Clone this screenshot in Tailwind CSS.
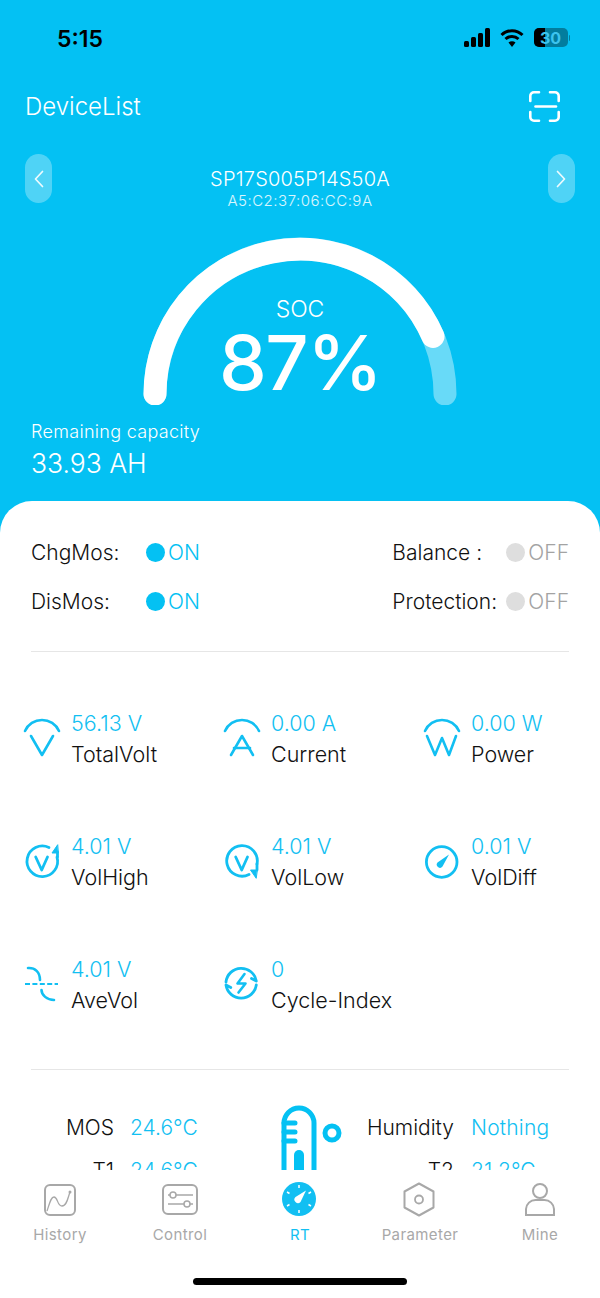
<!DOCTYPE html>
<html>
<head>
<meta charset="utf-8">
<script src="https://cdn.jsdelivr.net/npm/@tailwindcss/browser@4"></script>
</head>
<body class="m-0">
<div class="w-[600px] h-[1298px] flex flex-col overflow-hidden bg-[#04c1f3] font-['Inter','Liberation_Sans',sans-serif]">
  <!-- blue header -->
  <div class="h-[501px] shrink-0 text-white">
    <div class="h-[76px] relative flex items-center justify-between pl-[57px] pr-[30px] pb-[1px] text-black">
      <span class="text-[23px] font-semibold leading-none mt-[3px]">5:15</span>
      <div class="flex items-center gap-[10px]">
        <svg width="26" height="19" viewBox="0 0 26 19" fill="#000"><rect x="0" y="13" width="5" height="6" rx="1.5"/><rect x="7" y="9" width="5" height="10" rx="1.5"/><rect x="14" y="5" width="5" height="14" rx="1.5"/><rect x="21" y="0" width="5" height="19" rx="1.5"/></svg>
        <svg width="24" height="19" viewBox="0 0 24 19" fill="none" stroke="#000" stroke-width="3"><path d="M1.5 7 A15 15 0 0 1 22.5 7"/><path d="M5.5 11 A9.5 9.5 0 0 1 18.5 11"/><path d="M12 19 L8.5 14.6 A5 5 0 0 1 15.5 14.6 Z" fill="#000" stroke="none"/></svg>
        <div class="flex items-center gap-[1px]">
          <div class="relative w-[34px] h-[19px] rounded-[5px] bg-black/35 overflow-hidden flex items-center justify-center">
            <div class="absolute left-0 top-0 h-full w-[11px] bg-black"></div>
            <span class="relative text-[16px] font-bold leading-none text-[#3cc4ee]">30</span>
          </div>
          <div class="w-[1.5px] h-[6px] rounded-r-sm bg-black/35"></div>
        </div>
      </div>
    </div>
    <div class="h-[60px] flex items-center justify-between pl-[25px] pr-[40px]">
      <span class="text-[24px] leading-none font-light mt-[2px]">DeviceList</span>
      <svg width="31" height="31" viewBox="0 0 31 31" fill="none" stroke="#fff" stroke-width="2.6" stroke-linecap="round"><path d="M1.3 10 V5 A3.7 3.7 0 0 1 5 1.3 H10"/><path d="M21 1.3 H26 A3.7 3.7 0 0 1 29.7 5 V10"/><path d="M1.3 21 V26 A3.7 3.7 0 0 0 5 29.7 H10"/><path d="M21 29.7 H26 A3.7 3.7 0 0 0 29.7 26 V21"/><path d="M6.5 15.5 H27"/></svg>
    </div>
    <div class="mt-[18px] h-[49px] flex items-start justify-between px-[25px]">
      <div class="w-[27px] h-[49px] rounded-full bg-white/30 flex items-center justify-center">
        <svg width="10" height="18" viewBox="0 0 10 18" fill="none" stroke="#fff" stroke-opacity="0.9" stroke-width="1.7" stroke-linecap="round" stroke-linejoin="round"><path d="M8.5 1.5 L1.5 9 L8.5 16.5"/></svg>
      </div>
      <div class="mt-[14px] flex flex-col items-center">
        <span class="text-[20px] leading-[22px] font-light tracking-[0.2px]">SP17S005P14S50A</span>
        <span class="text-[15px] leading-[22px] font-light tracking-[0.5px] text-white/85">A5:C2:37:06:CC:9A</span>
      </div>
      <div class="w-[27px] h-[49px] rounded-full bg-white/30 flex items-center justify-center">
        <svg width="10" height="18" viewBox="0 0 10 18" fill="none" stroke="#fff" stroke-opacity="0.9" stroke-width="1.7" stroke-linecap="round" stroke-linejoin="round"><path d="M1.5 1.5 L8.5 9 L1.5 16.5"/></svg>
      </div>
    </div>
    <div class="relative mt-[34px] h-[168px] flex justify-center">
      <svg width="314" height="168" viewBox="143 237 314 168" fill="none" stroke-width="23" stroke-linecap="round">
        <path d="M155 394 A145 145 0 0 1 445 394" stroke="#fff" stroke-opacity="0.4"/>
        <path d="M155 394 A145 145 0 0 1 433 336.4" stroke="#fff"/>
      </svg>
      <div class="absolute inset-x-0 top-[59px] flex flex-col items-center">
        <span class="text-[23px] leading-[26px] font-light">SOC</span>
        <span class="text-[76px] leading-[60px] font-medium tracking-[-1.5px] mt-[10px]">87%</span>
      </div>
    </div>
    <div class="mt-[15px] pl-[31px] flex flex-col">
      <span class="text-[18px] leading-[24px] font-light tracking-[0.3px]">Remaining capacity</span>
      <span class="text-[26.500px] leading-[30px] font-light mt-[4px]">33.93 AH</span>
    </div>
  </div>

  <!-- white card -->
  <div class="flex-1 min-h-0 overflow-hidden bg-white rounded-t-[32px]">
    <div class="px-[31px] pt-[27px]">
      <div class="h-[49px] flex items-center text-[21px] font-light text-[#111]">
        <span class="w-[115px]">ChgMos:</span>
        <span class="w-[19px] h-[19px] rounded-full bg-[#04c1f3]"></span>
        <span class="ml-[3px] text-[#04c1f3]">ON</span>
        <span class="ml-auto w-[114px]">Balance :</span>
        <span class="w-[19px] h-[19px] rounded-full bg-[#dedede]"></span>
        <span class="ml-[3px] text-[#a3a3a3]">OFF</span>
      </div>
      <div class="h-[49px] flex items-center text-[21px] font-light text-[#111]">
        <span class="w-[115px]">DisMos:</span>
        <span class="w-[19px] h-[19px] rounded-full bg-[#04c1f3]"></span>
        <span class="ml-[3px] text-[#04c1f3]">ON</span>
        <span class="ml-auto w-[114px]">Protection:</span>
        <span class="w-[19px] h-[19px] rounded-full bg-[#dedede]"></span>
        <span class="ml-[3px] text-[#a3a3a3]">OFF</span>
      </div>
      <div class="mt-[25px] h-[1px] bg-[#e6e6e6]"></div>
    </div>

    <div class="grid grid-cols-[200px_200px_177px] auto-rows-[123px] pt-[56px] pl-[23px]">
      <div class="flex">
        <svg class="mt-[9px] shrink-0" width="38" height="42" viewBox="0 0 38 42" fill="none" stroke="#12bff2" stroke-width="2.6" stroke-linecap="round" stroke-linejoin="round"><path d="M2 14 A18.600 18.600 0 0 1 36 14"/><path d="M8 19 L19 38 L30 19"/></svg>
        <div class="ml-[10px] flex flex-col"><span class="text-[21.500px] leading-[31px] font-light text-[#12bff2]">56.13 V</span><span class="text-[21.500px] leading-[31px] font-light text-[#111]">TotalVolt</span></div>
      </div>
      <div class="flex">
        <svg class="mt-[9px] shrink-0" width="38" height="42" viewBox="0 0 38 42" fill="none" stroke="#12bff2" stroke-width="2.6" stroke-linecap="round" stroke-linejoin="round"><path d="M2 14 A18.600 18.600 0 0 1 36 14"/><path d="M8 38 L19 19 L30 38"/><path d="M11 31 H27"/></svg>
        <div class="ml-[10px] flex flex-col"><span class="text-[21.500px] leading-[31px] font-light text-[#12bff2]">0.00 A</span><span class="text-[21.500px] leading-[31px] font-light text-[#111]">Current</span></div>
      </div>
      <div class="flex">
        <svg class="mt-[9px] shrink-0" width="38" height="42" viewBox="0 0 38 42" fill="none" stroke="#12bff2" stroke-width="2.6" stroke-linecap="round" stroke-linejoin="round"><path d="M2 14 A18.600 18.600 0 0 1 36 14"/><path d="M4 19 L12 38 L19 21 L26 38 L33 19"/></svg>
        <div class="ml-[10px] flex flex-col"><span class="text-[21.500px] leading-[31px] font-light text-[#12bff2]">0.00 W</span><span class="text-[21.500px] leading-[31px] font-light text-[#111]">Power</span></div>
      </div>

      <div class="flex">
        <svg class="mt-[9px] shrink-0" width="38" height="42" viewBox="0 0 38 42" fill="none" stroke="#12bff2" stroke-width="2.800" stroke-linecap="round" stroke-linejoin="round"><path d="M34 17 A15.300 15.300 0 1 1 26 7.500"/><path d="M12.700 17 L18.700 30 L24.500 17"/><path d="M34.500 5 L29 13 H35 Z" fill="#12bff2" stroke-width="1"/><path d="M34.500 12 V17"/></svg>
        <div class="ml-[10px] flex flex-col"><span class="text-[21.500px] leading-[31px] font-light text-[#12bff2]">4.01 V</span><span class="text-[21.500px] leading-[31px] font-light text-[#111]">VolHigh</span></div>
      </div>
      <div class="flex">
        <svg class="mt-[9px] shrink-0" width="38" height="42" viewBox="0 0 38 42" fill="none" stroke="#12bff2" stroke-width="2.800" stroke-linecap="round" stroke-linejoin="round"><path d="M34 24 A15.300 15.300 0 1 0 26 34.500"/><path d="M12.700 17 L18.700 30 L24.500 17"/><path d="M33 38 L27.500 30 H34 Z" fill="#12bff2" stroke-width="1"/><path d="M34 24 V30"/></svg>
        <div class="ml-[10px] flex flex-col"><span class="text-[21.500px] leading-[31px] font-light text-[#12bff2]">4.01 V</span><span class="text-[21.500px] leading-[31px] font-light text-[#111]">VolLow</span></div>
      </div>
      <div class="flex">
        <svg class="mt-[9px] shrink-0" width="38" height="42" viewBox="0 0 38 42" fill="none" stroke="#12bff2" stroke-width="2.800" stroke-linecap="round" stroke-linejoin="round"><circle cx="18.700" cy="22" r="15.300"/><path d="M14.500 22.500 L26 14.500 L19.500 26.500 A3 3 0 0 1 14.500 22.500 Z" fill="#12bff2" stroke="none"/></svg>
        <div class="ml-[10px] flex flex-col"><span class="text-[21.500px] leading-[31px] font-light text-[#12bff2]">0.01 V</span><span class="text-[21.500px] leading-[31px] font-light text-[#111]">VolDiff</span></div>
      </div>

      <div class="flex">
        <svg class="mt-[9px] shrink-0" width="38" height="42" viewBox="0 0 38 42" fill="none" stroke="#12bff2" stroke-width="2.600" stroke-linecap="round"><path d="M5 5 C12 4.500 17 9 17 17"/><path d="M18.500 27 C18.500 32 24 37 31 37"/><path d="M2 21 H35" stroke-width="2" stroke-dasharray="5 2.400" stroke-linecap="butt"/></svg>
        <div class="ml-[10px] flex flex-col"><span class="text-[21.500px] leading-[31px] font-light text-[#12bff2]">4.01 V</span><span class="text-[21.500px] leading-[31px] font-light text-[#111]">AveVol</span></div>
      </div>
      <div class="flex">
        <svg class="mt-[9px] shrink-0" width="38" height="42" viewBox="0 0 38 42" fill="none" stroke="#12bff2" stroke-width="2.800" stroke-linecap="round" stroke-linejoin="round"><path d="M3 19 A15.300 15.300 0 0 1 33.300 18 L28.500 15.500"/><path d="M33.300 22 A15.300 15.300 0 0 1 3 22 L7.800 24.500"/><path d="M21.500 11 L14.500 20.500 H22.500 L15.500 29.500" stroke-width="2.600"/></svg>
        <div class="ml-[10px] flex flex-col"><span class="text-[21.500px] leading-[31px] font-light text-[#12bff2]">0</span><span class="text-[21.500px] leading-[31px] font-light text-[#111]">Cycle-Index</span></div>
      </div>
    </div>

    <div class="mx-[31px] -mt-[8px] h-[1px] bg-[#e6e6e6]"></div>

    <div class="flex pt-[35px] text-[21px] font-light">
      <div class="w-[281px] flex flex-col">
        <div class="h-[43px] flex items-start leading-[46px]"><span class="w-[114px] text-right text-[#111]">MOS</span><span class="ml-[16px] text-[#12bff2]">24.6°C</span></div>
        <div class="h-[43px] flex items-start leading-[46px]"><span class="w-[114px] text-right text-[#111]">T1</span><span class="ml-[16px] text-[#12bff2]">24.6°C</span></div>
      </div>
      <svg class="shrink-0 w-[62px]" height="110" viewBox="0 0 62 110" fill="none" stroke="#04c1f3" stroke-width="5"><path d="M3 110 V18 A15 15 0 0 1 33 18 V110"/><path d="M3 18 H14 M3 27 H14 M3 36 H14" stroke-linecap="round"/><path d="M13 110 V50 A5 5 0 0 1 23 50 V110 Z" fill="#04c1f3" stroke="none"/><circle cx="51" cy="28" r="7"/></svg>
      <div class="ml-[23px] flex flex-col">
        <div class="h-[43px] flex items-start leading-[46px]"><span class="w-[88px] text-right text-[#111]">Humidity</span><span class="ml-[17px] tracking-[0.2px] text-[#12bff2]">Nothing</span></div>
        <div class="h-[43px] flex items-start leading-[46px]"><span class="w-[88px] text-right text-[#111]">T2</span><span class="ml-[17px] text-[#12bff2]">21.2°C</span></div>
      </div>
    </div>
  </div>

  <!-- tab bar -->
  <div class="h-[128px] shrink-0 bg-white flex flex-col relative">
    <div class="grid grid-cols-5 pt-[12px]">
      <div class="flex flex-col items-center text-[#a8a8a8]">
        <svg width="36" height="36" viewBox="0 0 36 36" fill="none" stroke="#a8a8a8" stroke-width="2"><rect x="3" y="3" width="30" height="30" rx="5"/><path d="M5 29 C8 20 9 15 12 15 C16 15 15 24 20 24 C25 24 26 15 28 10" stroke-width="1.300"/><circle cx="28" cy="10" r="1.500" fill="#a8a8a8" stroke="none"/></svg>
        <span class="mt-[6px] text-[15px] leading-[22px] tracking-[0.4px]">History</span>
      </div>
      <div class="flex flex-col items-center text-[#a8a8a8]">
        <svg width="36" height="36" viewBox="0 0 36 36" fill="none" stroke="#a8a8a8" stroke-width="2"><rect x="1" y="3" width="34" height="29" rx="5"/><path d="M6 13 H8 M14 13 H31 M6 22 H22 M28 22 H31" stroke-width="1.500"/><circle cx="11" cy="13" r="3" stroke-width="1.500"/><circle cx="25" cy="22" r="3" stroke-width="1.500"/></svg>
        <span class="mt-[6px] text-[15px] leading-[22px] tracking-[0.4px]">Control</span>
      </div>
      <div class="flex flex-col items-center text-[#12bff2]">
        <svg width="36" height="36" viewBox="0 0 36 36" fill="none" stroke="#fff" stroke-width="1.500"><circle cx="17" cy="17" r="17" fill="#12bff2" stroke="none"/><path d="M17 3 V6 M17 28 V31 M5 10 L7.500 11.500 M5 24 L7.500 22.500 M29 10 L26.500 11.500 M29 24 L26.500 22.500"/><path d="M13.500 15 L24 8.500 L18.500 20 A3.200 3.200 0 0 1 13.500 15 Z" fill="#fff" stroke="none"/></svg>
        <span class="mt-[6px] text-[15px] leading-[22px] tracking-[0.4px]">RT</span>
      </div>
      <div class="flex flex-col items-center text-[#a8a8a8]">
        <svg width="36" height="36" viewBox="0 0 36 36" fill="none" stroke="#a8a8a8" stroke-width="2" stroke-linejoin="round"><path d="M17 1.500 L31.500 9.500 V25.500 L17 33.500 L2.500 25.500 V9.500 Z"/><circle cx="17" cy="17.500" r="4" stroke-width="1.800"/></svg>
        <span class="mt-[6px] text-[15px] leading-[22px] tracking-[0.4px]">Parameter</span>
      </div>
      <div class="flex flex-col items-center text-[#a8a8a8]">
        <svg width="36" height="36" viewBox="0 0 36 36" fill="none" stroke="#a8a8a8" stroke-width="2"><circle cx="18" cy="9" r="7"/><path d="M4 33 V27 A9.500 9.500 0 0 1 13.500 18 H22.500 A9.500 9.500 0 0 1 32 27 V33 Z"/></svg>
        <span class="mt-[6px] text-[15px] leading-[22px] tracking-[0.4px]">Mine</span>
      </div>
    </div>
    <div class="mt-auto mb-[13px] mx-auto w-[214px] h-[7px] rounded-full bg-black"></div>
  </div>
</div>
</body>
</html>
